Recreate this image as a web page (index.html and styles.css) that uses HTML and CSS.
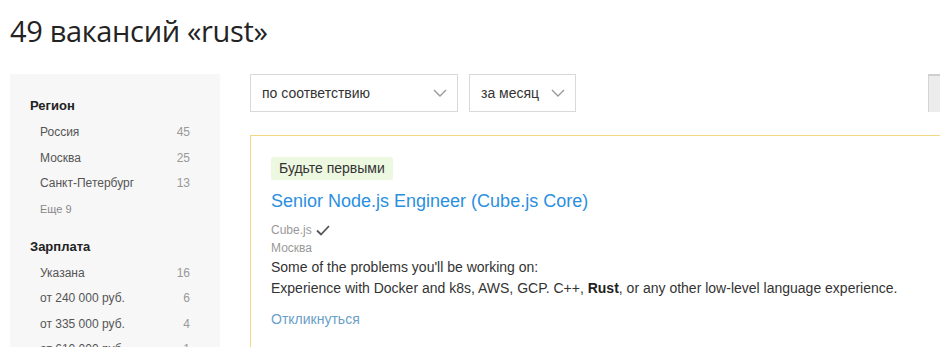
FILE: index.html
```html
<!DOCTYPE html>
<html lang="ru">
<head>
    <meta charset="UTF-8">
    <title>49 вакансий «rust»</title>
    <link rel="stylesheet" href="styles.css">
</head>
<body>
<h1 class="page-title">49 вакансий «rust»</h1>

<div class="layout">
    <aside class="filters">
        <div class="filter-group">
            <div class="filter-title">Регион</div>
            <ul class="filter-list">
                <li><span>Россия</span><span class="count">45</span></li>
                <li><span>Москва</span><span class="count">25</span></li>
                <li><span>Санкт-Петербург</span><span class="count">13</span></li>
            </ul>
            <div class="more">Еще 9</div>
        </div>
        <div class="filter-group">
            <div class="filter-title">Зарплата</div>
            <ul class="filter-list">
                <li><span>Указана</span><span class="count">16</span></li>
                <li><span>от 240 000 руб.</span><span class="count">6</span></li>
                <li><span>от 335 000 руб.</span><span class="count">4</span></li>
                <li><span>от 610 000 руб.</span><span class="count">1</span></li>
            </ul>
        </div>
    </aside>

    <main class="results">
        <div class="toolbar">
            <div class="select select-order">
                <span>по соответствию</span>
                <svg class="chevron" width="14" height="8" viewBox="0 0 14 8"><path d="M1 1l6 6 6-6" fill="none" stroke="#9a9a9a" stroke-width="1.4"/></svg>
            </div>
            <div class="select select-period">
                <span>за месяц</span>
                <svg class="chevron" width="14" height="8" viewBox="0 0 14 8"><path d="M1 1l6 6 6-6" fill="none" stroke="#9a9a9a" stroke-width="1.4"/></svg>
            </div>
            <div class="toolbar-btn"></div>
        </div>

        <div class="vacancy">
            <span class="badge">Будьте первыми</span>
            <a class="vacancy-title" href="#">Senior Node.js Engineer (Cube.js Core)</a>
            <div class="company">Cube.js
                <svg width="14" height="11" viewBox="0 0 14 11"><path d="M1 5.5l4 4 8-8.5" fill="none" stroke="#555" stroke-width="1.8"/></svg>
            </div>
            <div class="city">Москва</div>
            <p class="desc">Some of the problems you'll be working on:</p>
            <p class="desc">Experience with Docker and k8s, AWS, GCP. C++, <b>Rust</b>, or any other low-level language experience.</p>
            <a class="respond" href="#">Откликнуться</a>
        </div>
    </main>
</div>
</body>
</html>
```

FILE: styles.css
```css
body {
    margin: 0;
    padding: 0;
    background: #fff;
    color: #333;
    font-family: "Liberation Sans", Arial, sans-serif;
    height: 347px;
    overflow: hidden;
}

.page-title {
    margin: 0;
    padding: 11px 0 0 10px;
    height: 62px;
    box-sizing: border-box;
    font-family: "Open Sans", sans-serif;
    font-weight: 400;
    font-size: 29px;
    line-height: 40px;
    color: #232323;
    letter-spacing: -0.35px;
}

.layout {
    display: flex;
    padding: 12px 0 0 10px;
}

.filters {
    width: 210px;
    flex-shrink: 0;
    background: #f7f7f7;
    padding: 24px 30px 0 20px;
    box-sizing: border-box;
    height: 275px;
    overflow: hidden;
}

.filter-group {
    margin-bottom: 22px;
}

.filter-title {
    font-size: 13px;
    font-weight: bold;
    color: #222;
    line-height: 16px;
    margin-bottom: 10px;
}

.filter-list {
    list-style: none;
    margin: 0;
    padding: 0 0 0 10px;
}

.filter-list li {
    display: flex;
    justify-content: space-between;
    font-size: 12px;
    line-height: 16px;
    color: #555;
    margin-bottom: 9.5px;
}

.filter-list .count {
    color: #999;
}

.more {
    font-size: 11px;
    color: #888;
    padding-left: 10px;
    line-height: 16px;
}

.results {
    flex: 1;
    margin-left: 30px;
}

.toolbar {
    display: flex;
    gap: 11px;
    height: 38px;
}

.select {
    display: flex;
    align-items: center;
    justify-content: space-between;
    box-sizing: border-box;
    height: 38px;
    border: 1px solid #d9d9d9;
    padding: 0 10px 0 11px;
    font-size: 14px;
    color: #333;
}

.select-order {
    width: 208px;
}

.select-period {
    width: 107px;
}

.toolbar-btn {
    margin-left: auto;
    width: 12px;
    height: 38px;
    box-sizing: border-box;
    background: #ececec;
    border-top: 2px solid #cfcfcf;
    border-left: 1px solid #d4d4d4;
}

.vacancy {
    margin-top: 23px;
    border: 1px solid #f2d784;
    border-right: none;
    border-bottom: none;
    padding: 21px 20px 0 20px;
    height: 212px;
    box-sizing: border-box;
}

.badge {
    display: inline-block;
    background: #edf8e1;
    color: #333;
    font-size: 14px;
    line-height: 23px;
    padding: 0 8px;
    border-radius: 2px;
}

.vacancy-title {
    display: block;
    margin-top: 7px;
    font-size: 18px;
    line-height: 28px;
    color: #2b8fe0;
    text-decoration: none;
}

.company {
    margin-top: 7px;
    font-size: 12px;
    line-height: 17px;
    color: #999;
    display: flex;
    align-items: center;
    gap: 4px;
}

.city {
    font-size: 12px;
    line-height: 18px;
    color: #999;
}

.desc {
    margin: 0;
    font-size: 14px;
    line-height: 21px;
    color: #333;
}

.desc b {
    color: #222;
}

.respond {
    display: inline-block;
    margin-top: 12px;
    font-size: 14px;
    color: #6aa0c8;
    text-decoration: none;
}
```
